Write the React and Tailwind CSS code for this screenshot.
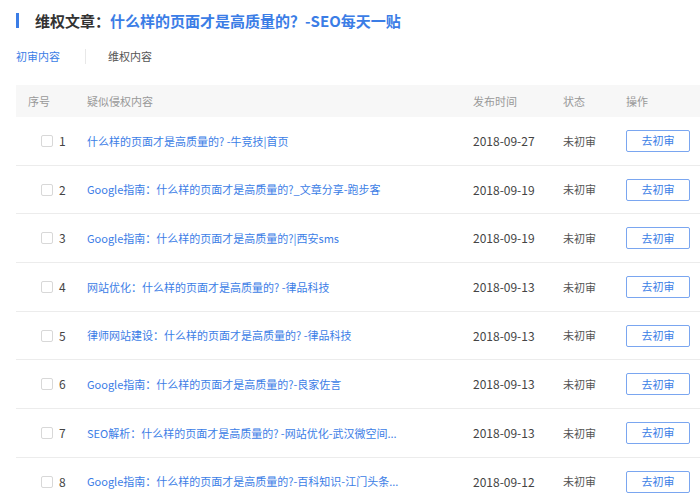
import React from "react";

const rows = [
  { id: 1, title: "什么样的页面才是高质量的? -牛竞技|首页", date: "2018-09-27" },
  { id: 2, title: "Google指南：什么样的页面才是高质量的?_文章分享-跑步客", date: "2018-09-19" },
  { id: 3, title: "Google指南：什么样的页面才是高质量的?|西安sms", date: "2018-09-19" },
  { id: 4, title: "网站优化：什么样的页面才是高质量的? -律品科技", date: "2018-09-13" },
  { id: 5, title: "律师网站建设：什么样的页面才是高质量的? -律品科技", date: "2018-09-13" },
  { id: 6, title: "Google指南：什么样的页面才是高质量的?-良家佐言", date: "2018-09-13" },
  { id: 7, title: "SEO解析：什么样的页面才是高质量的? -网站优化-武汉微空间...", date: "2018-09-13" },
  { id: 8, title: "Google指南：什么样的页面才是高质量的?-百科知识-江门头条...", date: "2018-09-12" },
];

const App = () => {
  return (
    <div
      className="w-[700px] h-[502px] overflow-hidden bg-white pl-4"
      style={{ fontFamily: '"Noto Sans CJK SC", "Noto Sans", sans-serif' }}
    >
      {/* Title */}
      <div className="flex items-center h-[40px] pt-[1px]">
        <div className="w-[3px] h-[15px] bg-[#3b7de6]" />
        <h1 className="ml-4 text-[15px] font-bold text-[#333] leading-none">
          维权文章：<span className="text-[#3b7de6]">什么样的页面才是高质量的？-SEO每天一贴</span>
        </h1>
      </div>

      {/* Tabs */}
      <div className="flex items-center h-[32px] text-[11px]">
        <span className="text-[#3b7de6]">初审内容</span>
        <span className="ml-[25px] w-px h-[15px] bg-[#e8e8e8]" />
        <span className="ml-[22px] text-[#555]">维权内容</span>
      </div>

      {/* Table */}
      <div className="mt-[13px]">
        <div className="flex items-center h-[32px] bg-[#f7f7f7] text-[11px] text-[#999]">
          <div className="w-[71px] pl-3">序号</div>
          <div className="w-[386px]">疑似侵权内容</div>
          <div className="w-[90px]">发布时间</div>
          <div className="w-[63px]">状态</div>
          <div>操作</div>
        </div>

        {rows.map((row) => (
          <div
            key={row.id}
            className="flex items-center h-[48.7px] border-b border-[#ececec] text-[11px]"
          >
            <div className="w-[71px] pl-[25px] flex items-center">
              <span className="w-[12px] h-[12px] border border-[#d8d8d8] rounded-[2px] bg-white" />
              <span className="ml-[6px] text-[12px] text-[#444]">{row.id}</span>
            </div>
            <div className="w-[386px] text-[#3b7de6] whitespace-nowrap overflow-hidden">
              {row.title}
            </div>
            <div className="w-[90px] text-[12px] text-[#444]">{row.date}</div>
            <div className="w-[63px] text-[#555]">未初审</div>
            <div>
              <button className="w-[64px] h-[22px] border border-[#7aa6f0] rounded-[2px] text-[#3b7de6] text-[11px] leading-none">
                去初审
              </button>
            </div>
          </div>
        ))}
      </div>
    </div>
  );
};

export default App;
